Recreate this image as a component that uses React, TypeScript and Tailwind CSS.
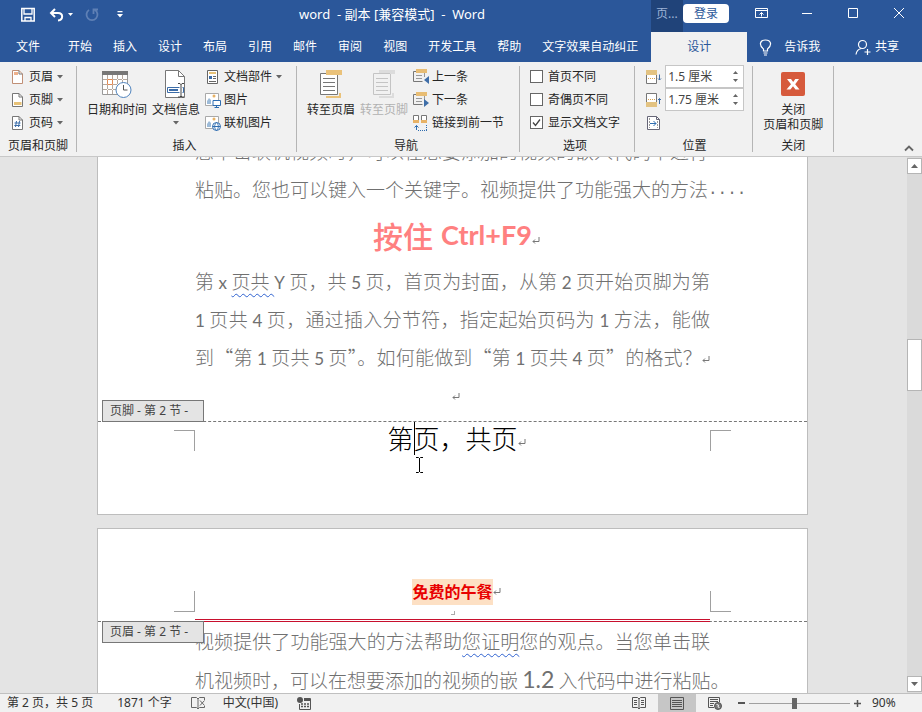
import type { ReactNode } from "react";

const UI_FONT = "font-['Noto_Sans','Noto_Sans_CJK_SC',sans-serif]";
const DOC_FONT = "font-['Noto_Sans_CJK_SC',sans-serif]";

const tabs = ["开始", "插入", "设计", "布局", "引用", "邮件", "审阅", "视图", "开发工具", "帮助", "文字效果自动纠正"];

/* ---------- small shared pieces ---------- */

function Caret() {
  return (
    <svg width="6" height="4" viewBox="0 0 6 4" className="shrink-0">
      <path d="M0 0h6L3 3.5z" fill="#666" />
    </svg>
  );
}

function ReturnMark() {
  return (
    <svg width="8" height="8" viewBox="0 0 8 8" className="inline-block shrink-0">
      <path d="M7 0v4.5H1M3 2.5l-2 2 2 2" fill="none" stroke="#777" />
    </svg>
  );
}

function Group({ label, pad, children }: { label: string; pad: string; children: ReactNode }) {
  return (
    <section className="flex">
      <div className={`flex flex-col ${pad}`}>
        <div className="flex flex-1 gap-[5px] pt-[3px]">{children}</div>
        <h2 className="pb-0.5 text-center leading-4">{label}</h2>
      </div>
      <div className="mb-1 mt-1 w-px bg-[#b5b5b5]" />
    </section>
  );
}

function Small({ icon, label, menu }: { icon: ReactNode; label: string; menu?: boolean }) {
  return (
    <button className="flex h-[23px] items-center gap-[3px] whitespace-nowrap">
      {icon}
      <span className="pr-px">{label}</span>
      {menu && <Caret />}
    </button>
  );
}

function Big({ icon, label, menu, disabled }: { icon: ReactNode; label: ReactNode; menu?: boolean; disabled?: boolean }) {
  return (
    <button disabled={disabled} className="flex flex-col items-center gap-1 self-start whitespace-nowrap pt-[5px] leading-[15px] disabled:text-[#b1b1b1]">
      {icon}
      <span>{label}</span>
      {menu && <Caret />}
    </button>
  );
}

function Check({ label, checked }: { label: string; checked?: boolean }) {
  return (
    <label className="flex h-[23px] items-center gap-[5px] whitespace-nowrap">
      <span className="grid size-[13px] *:col-start-1 *:row-start-1">
        <input type="checkbox" defaultChecked={checked} className="peer size-[13px] appearance-none border border-[#666] bg-white" />
        <svg viewBox="0 0 13 13" className="pointer-events-none hidden size-[13px] peer-checked:block">
          <path d="M3 6.5l2.5 3L10 3.5" fill="none" stroke="#444" strokeWidth="1.3" />
        </svg>
      </span>
      {label}
    </label>
  );
}

function Measure({ id, name, value, icon }: { id: string; name: string; value: string; icon: ReactNode }) {
  return (
    <div className="flex h-[23px] items-center gap-[3px]">
      <label htmlFor={id} aria-label={name}>{icon}</label>
      <div className="flex h-[23px] border border-[#c6c6c6] bg-white">
        <input id={id} defaultValue={value} className="w-[61px] pl-0.5 text-[#444] outline-none" />
        <div className="flex w-4 flex-col justify-center gap-[5px]">
          <button aria-label="增加" className="flex justify-center">
            <svg width="5" height="3" viewBox="0 0 5 3"><path d="M0 3h5L2.500 0z" fill="#666" /></svg>
          </button>
          <button aria-label="减少" className="flex justify-center">
            <svg width="5" height="3" viewBox="0 0 5 3"><path d="M0 0h5L2.500 3z" fill="#666" /></svg>
          </button>
        </div>
      </div>
    </div>
  );
}

/* ---------- ribbon icons ---------- */

function PageIcon({ kind }: { kind: "header" | "footer" | "number" }) {
  return (
    <svg width="16" height="16" viewBox="0 0 16 16" fill="none">
      <path d="M2.500 1.500h6.500l3.500 3.500v9.500h-10z" fill="#fff" stroke={kind === "header" ? "#c08f76" : "#777"} />
      <path d="M9 1.500v3.500h3.500" stroke="#777" />
      {kind === "header" && <path d="M4 3h4v3H4z" fill="#eeb18c" />}
      {kind === "footer" && <path d="M4 10h7.500v3H4z" fill="#e8c277" />}
      {kind === "number" && <path d="M6.500 6l-1 6M9.500 6l-1 6M4.500 8h6M4.300 10.500h6" stroke="#3b6ca8" />}
    </svg>
  );
}

function CalendarIcon() {
  return (
    <svg width="30" height="28" viewBox="0 0 30 28" fill="none">
      <path d="M.5 1.500h25v23H.5z" fill="#fff" stroke="#999" />
      <path d="M0 1h26v4H0z" fill="#777" />
      <path d="M5.500 5v19M10.500 5v19M15.500 5v19M20.500 5v19M1 9.500h24M1 14.500h24M1 19.500h24" stroke="#b5a89e" strokeDasharray="4 1" />
      <path d="M5.500 9.500h5v5h-5z" stroke="#e08a55" />
      <circle cx="21.500" cy="20" r="7.500" fill="#fff" stroke="#4f83bd" />
      <path d="M21.500 15v5h4" stroke="#555" />
    </svg>
  );
}

function DocInfoIcon() {
  return (
    <svg width="22" height="28" viewBox="0 0 22 28" fill="none">
      <path d="M.5.5h13l6 6v21H.5z" fill="#fff" stroke="#777" />
      <path d="M13.500.5v6h6" stroke="#777" />
      <path d="M2.500 17.500h16v5h-16z" fill="#fff" stroke="#3b6ca8" />
      <path d="M4 19h9v2H4z" fill="#3b6ca8" />
      <path d="M14.500 13v14h3V13z" fill="#fff" />
      <path d="M13 13.500h2l1 1 1-1h2M16 14v12M13 27h2l1-1 1 1h2" stroke="#444" />
    </svg>
  );
}

function PartsIcon() {
  return (
    <svg width="16" height="16" viewBox="0 0 16 16" fill="none">
      <path d="M2.500 1.500h10v13h-10z" fill="#fff" stroke="#666" />
      <path d="M4 3h7v2H4z" fill="#e8c277" />
      <path d="M4 7h3v3H4z" fill="#3b6ca8" />
      <path d="M8 7.500h3M8 9.500h3M4 12.500h7" stroke="#666" />
    </svg>
  );
}

function PictureIcon({ online }: { online?: boolean }) {
  return (
    <svg width="16" height="16" viewBox="0 0 16 16" fill="none">
      <path d="M.5 1.500h13v12H.5z" fill="#fff" stroke="#a9a9a9" />
      <circle cx="9" cy="4" r="1.500" fill="#e8b265" />
      <path d="M2 12V9l2-3 2 2v4z" fill="#9dbbd8" />
      {online ? (
        <>
          <circle cx="11.500" cy="11.500" r="4" fill="#fff" stroke="#2f6db0" />
          <path d="M7.500 11.500h8M11.500 7.500c-2.500 2.500-2.500 5.500 0 8M11.500 7.500c2.500 2.500 2.500 5.500 0 8" stroke="#2f6db0" />
        </>
      ) : (
        <>
          <path d="M8 8.500h7.500v5H8z" fill="#fff" stroke="#2f6db0" />
          <path d="M11.500 13.500v2M9.500 15.500h4.500" stroke="#2f6db0" />
        </>
      )}
    </svg>
  );
}

function GotoIcon({ off }: { off?: boolean }) {
  const line = off ? "#c4c4c4" : "#777";
  const bar = off ? "#dcdcdc" : "#eac27a";
  return (
    <svg width="22" height="28" viewBox="0 0 22 28" fill="none">
      <path d="M.5 3.500h17v21H.5z" fill={off ? "#f1f1f1" : "#fff"} stroke={line} />
      <path d={off ? "M17 0h5v4h-5zM6 0h11v3H6z" : "M6 0h16v5H6z"} fill={bar} />
      <path d="M3 8.500h12M3 12.500h12M3 16.500h12M3 20.500h12" stroke={line} />
      <path d="M6 26h15v2H6zM19 23h2v3h-2z" fill={bar} />
    </svg>
  );
}

function StepIcon({ next }: { next?: boolean }) {
  return (
    <svg width="16" height="16" viewBox="0 0 16 16" fill="none">
      <path d="M3 2.500H.5v10h9" stroke="#777" />
      <path d="M3 0h11v4H3z" fill="#e8bd74" />
      <path d="M11.500 4v4M3 6.500h6M3 9.500h6" stroke="#999" />
      <path d={next ? "M11 7l5 4-5 4z" : "M16 7l-5 4 5 4z"} fill="#3f6ea8" />
    </svg>
  );
}

function LinkPrevIcon() {
  return (
    <svg width="16" height="16" viewBox="0 0 16 16" fill="none">
      <path d="M.5 5V.5h5V5M8.500 5V.5h5V5" fill="#fff" stroke="#777" />
      <path d="M0 5h6v3H0zM8 5h6v3H8z" fill="#e8b265" />
      <path d="M3.500 15v-4.500M1.500 12.500l2-2 2 2" stroke="#2f6db0" />
      <path d="M5 15.500h9M13.500 10v5" stroke="#2f6db0" strokeDasharray="1 1" />
    </svg>
  );
}

function MarginIcon({ bottom }: { bottom?: boolean }) {
  return (
    <svg width="17" height="16" viewBox="0 0 17 16" fill="none">
      <path d={bottom ? "M1.500 11V1.500h10V11" : "M1.500 5v9.500h10V5"} fill="#fff" stroke="#777" />
      <path d={bottom ? "M1 10h11v5H1z" : "M1 1h11v5H1z"} fill="#e3c382" />
      <path d={bottom ? "M3 7.500h8" : "M3 9.500h8"} stroke="#d9a24e" strokeDasharray="1 1" />
      <path d={bottom ? "M14.500 12V6.500M13 8l1.500-1.500L16 8" : "M14.500 5.500V11M13 9.500l1.500 1.500L16 9.500"} stroke="#3f6ea8" />
    </svg>
  );
}

function AlignTabIcon() {
  return (
    <svg width="17" height="16" viewBox="0 0 17 16" fill="none">
      <path d="M2.500 1.500h9l3 3v10h-12z" fill="#fff" stroke="#667" />
      <path d="M11.500 1.500v3h3" stroke="#667" />
      <path d="M4.500 3v10M12.500 6v7" stroke="#999" strokeDasharray="2 1" />
      <path d="M5 8.500h6M8.500 6L11 8.500 8.500 11" stroke="#2f6db0" />
    </svg>
  );
}

function CloseIcon() {
  return (
    <svg width="24" height="28" viewBox="0 0 24 28">
      <rect y="2" width="24" height="24" rx="2" fill="#d65a3c" />
      <path d="M6 9h4l2.200 3L14.300 9h3.700l-3.800 5.200 4.300 5.300h-4L12 16.200l-2.600 3.300H5.500l4.500-5.300z" fill="#fff" />
    </svg>
  );
}

/* ---------- window chrome ---------- */

function TitleBar() {
  return (
    <header className="flex h-8 items-start text-white">
      <div className="flex flex-[278] items-center pl-[21px] pt-[7px]">
        <button aria-label="保存">
          <svg width="14" height="15" viewBox="0 0 14 15" fill="none" stroke="#fff">
            <path d="M.8 1.500h12.400v12.500H.8z" strokeWidth="1.500" />
            <path d="M3 2v5h8V2M4 14v-3.500h6V14" strokeWidth="1.300" />
          </svg>
        </button>
        <button aria-label="撤消" className="ml-3.5 flex items-center gap-1">
          <svg width="15" height="14" viewBox="0 0 15 14" fill="none" stroke="#fff" strokeWidth="2">
            <path d="M6 1L2 5l4 4M2.500 5H9c5.500 0 5.500 7 0 7.500" />
          </svg>
          <svg width="5" height="3" viewBox="0 0 5 3"><path d="M0 0h5L2.500 3z" fill="#fff" /></svg>
        </button>
        <button aria-label="重复" className="ml-3" disabled>
          <svg width="14" height="14" viewBox="0 0 14 14" fill="none" stroke="#5f80b5" strokeWidth="1.800">
            <path d="M4 2a5.500 5.500 0 1 0 6 0M8.500 6V1.500H13" />
          </svg>
        </button>
        <button aria-label="自定义快速访问工具栏" className="ml-[18px]">
          <svg width="6" height="7" viewBox="0 0 6 7"><path d="M.5 0h5v1.300h-5zM0 3h6L3 6.500z" fill="#fff" /></svg>
        </button>
      </div>
      <h1 className="whitespace-pre pt-1 text-[13px] leading-5">word  - 副本 [兼容模式]  -  Word</h1>
      <div className="flex flex-[437] items-start justify-end">
        <div className="h-8 w-8 bg-[#204379] pl-[5px] leading-7 text-[#9db3d6]">页...</div>
        <button className="mt-1 h-[19px] w-[46px] rounded-sm bg-white leading-[19px] text-[#2b579a]">登录</button>
        <div className="flex items-start gap-[33px] pl-[26px] pr-[17px] pt-[7px]">
          <button aria-label="功能区显示选项">
            <svg width="13" height="12" viewBox="0 0 13 12" fill="none" stroke="#fff">
              <path d="M.5 1.500h12v9H.5zM0 3.500h13M6.500 9.500v-4M4.500 7.500l2-2 2 2" />
            </svg>
          </button>
          <button aria-label="最小化">
            <svg width="13" height="12" viewBox="0 0 13 12"><path d="M1 6.500h10" stroke="#fff" /></svg>
          </button>
          <button aria-label="最大化">
            <svg width="13" height="12" viewBox="0 0 13 12"><path d="M1.500 1.500h9v9h-9z" fill="none" stroke="#fff" /></svg>
          </button>
          <button aria-label="关闭">
            <svg width="12" height="12" viewBox="0 0 12 12"><path d="M1 1l10 10M11 1L1 11" stroke="#fff" /></svg>
          </button>
        </div>
      </div>
    </header>
  );
}

function TabBar() {
  return (
    <nav className="flex h-[30px] items-stretch whitespace-nowrap pl-4 text-white">
      <button className="mr-7">文件</button>
      <div className="flex gap-[21px]">
        {tabs.map((tab) => (
          <button key={tab}>{tab}</button>
        ))}
      </div>
      <button className="ml-[13px] w-24 bg-[#f1f1f1] text-[#2b579a]">设计</button>
      <button className="ml-3 flex items-center gap-3">
        <svg width="13" height="17" viewBox="0 0 13 17" fill="none" stroke="#fff" strokeWidth="1.200">
          <path d="M4.500 12V10C-.5 6 1 1 6.500 1s7 5 2 9v2zM4.500 14h4M5 16h3" />
        </svg>
        告诉我
      </button>
      <button className="ml-auto mr-[23px] flex items-center gap-1">
        <svg width="16" height="17" viewBox="0 0 16 17" fill="none" stroke="#fff" strokeWidth="1.200">
          <circle cx="7.500" cy="5.500" r="4" />
          <path d="M1 15.500c.5-3.500 2.500-5.500 5.500-6M12.500 10v6M9.500 13h6" />
        </svg>
        共享
      </button>
    </nav>
  );
}

function Ribbon() {
  return (
    <div className="flex h-[95px] shrink-0 border-b border-[#c8c8c8] bg-[#f1f1f1] text-[#262626]">
      <Group label="页眉和页脚" pad="px-2">
        <div className="pl-0.5">
          <Small icon={<PageIcon kind="header" />} label="页眉" menu />
          <Small icon={<PageIcon kind="footer" />} label="页脚" menu />
          <Small icon={<PageIcon kind="number" />} label="页码" menu />
        </div>
      </Group>
      <Group label="插入" pad="pl-2.5 pr-3.5">
        <Big icon={<CalendarIcon />} label="日期和时间" />
        <Big icon={<DocInfoIcon />} label="文档信息" menu />
        <div>
          <Small icon={<PartsIcon />} label="文档部件" menu />
          <Small icon={<PictureIcon />} label="图片" />
          <Small icon={<PictureIcon online />} label="联机图片" />
        </div>
      </Group>
      <Group label="导航" pad="pl-2.5 pr-3.5">
        <Big icon={<GotoIcon />} label="转至页眉" />
        <Big icon={<GotoIcon off />} label="转至页脚" disabled />
        <div>
          <Small icon={<StepIcon />} label="上一条" />
          <Small icon={<StepIcon next />} label="下一条" />
          <Small icon={<LinkPrevIcon />} label="链接到前一节" />
        </div>
      </Group>
      <Group label="选项" pad="pl-2.5 pr-3.5">
        <div>
          <Check label="首页不同" />
          <Check label="奇偶页不同" />
          <Check label="显示文档文字" checked />
        </div>
      </Group>
      <Group label="位置" pad="pl-2.5 pr-2">
        <div>
          <Measure id="header-top" name="页眉顶端距离" value="1.5 厘米" icon={<MarginIcon />} />
          <Measure id="footer-bottom" name="页脚底端距离" value="1.75 厘米" icon={<MarginIcon bottom />} />
          <button aria-label="插入对齐制表位" className="flex h-[23px] items-center"><AlignTabIcon /></button>
        </div>
      </Group>
      <Group label="关闭" pad="px-2.5">
        <Big icon={<CloseIcon />} label={<>关闭<br />页眉和页脚</>} />
      </Group>
      <button aria-label="折叠功能区" className="mb-1 ml-auto mr-2 self-end">
        <svg width="10" height="7" viewBox="0 0 10 7"><path d="M1 5.500l4-4 4 4" fill="none" stroke="#666" strokeWidth="1.800" /></svg>
      </button>
    </div>
  );
}

/* ---------- document ---------- */

// latin runs use their own face, like a mixed-script paragraph in the editor
function Mixed({ text }: { text: string }) {
  return text.split(/([0-9A-Za-z+.]+)/).map((part, i) =>
    i % 2 ? <span key={i} className="font-[Lato,sans-serif] text-[17px] font-normal">{part}</span> : part,
  );
}

function Line({ children, full }: { children: ReactNode; full?: boolean }) {
  return (
    <p className={full ? "h-[38px] whitespace-nowrap leading-[38px] [text-align-last:justify]" : "h-[38px] whitespace-nowrap leading-[38px]"}>
      {children}
    </p>
  );
}

function Wavy({ children }: { children: ReactNode }) {
  return <span className="underline decoration-[#2f62d0] decoration-wavy decoration-1 underline-offset-4">{children}</span>;
}

function Tag({ children }: { children: ReactNode }) {
  return (
    <div className={`${UI_FONT} h-[22px] w-[102px] whitespace-nowrap border border-[#777] bg-[#e4e4e4] pl-[7px] text-xs leading-5 text-[#444]`}>
      {children}
    </div>
  );
}

function FirstPage() {
  return (
    <article className="relative -mt-[25px] w-[711px] shrink-0 border border-t-0 border-[#bdbdbd] bg-white">
      <div className="h-[289px] px-[97px] text-[19px] font-light text-[#707070]">
        <Line>您单击联机视频时，可以在想要添加的视频的嵌入代码中进行</Line>
        <Line>粘贴。您也可以键入一个关键字。视频提供了功能强大的方法<span className="font-['Liberation_Mono',monospace] text-base font-normal">····</span></Line>
        <h3 className="flex h-[54px] items-center justify-center text-[30px] font-medium leading-[54px] text-[#ff8080]">
          按住<span className="ml-2 font-[Lato,sans-serif] text-[27px] font-bold">Ctrl+F9</span>
          <span className="-mr-2 flex pt-3"><ReturnMark /></span>
        </h3>
        <Line full><Mixed text="第 x " /><Wavy>页共 </Wavy><Mixed text="Y 页，共 5 页，首页为封面，从第 2 页开始页脚为第" /></Line>
        <Line full><Mixed text="1 页共 4 页，通过插入分节符，指定起始页码为 1 方法，能做" /></Line>
        <Line full><Mixed text="到“第 1 页共 5 页”。如何能做到“第 1 页共 4 页”的格式？" /><ReturnMark /></Line>
        <div className="flex h-[42px] items-center justify-center pl-1.5"><ReturnMark /></div>
      </div>
      <footer className="flex h-[93px] items-start border-t border-dashed border-[#777] px-[76px]">
        <div className="mt-2 size-[21px] border-r border-t border-[#a0a0a0]" />
        <div className="flex h-9 flex-1 items-start justify-center text-[26px] font-light leading-8 text-black">
          第<span className="-mr-px h-[33px] w-px bg-black" />页，共页
          <span className="-mr-2 flex pt-[17px]"><ReturnMark /></span>
        </div>
        <div className="mt-2 size-[21px] border-l border-t border-[#a0a0a0]" />
      </footer>
      <div className="absolute left-1 top-[268px]"><Tag>页脚 - 第 2 节 -</Tag></div>
      <svg width="7" height="16" viewBox="0 0 7 16" className="absolute left-[318px] top-[325px]">
        <path d="M0 .5h2.500l1 1 1-1H7M3.500 1v14M0 15.500h2.500l1-1 1 1H7" fill="none" stroke="#000" />
      </svg>
    </article>
  );
}

function SecondPage() {
  return (
    <article className="relative w-[711px] shrink-0 border border-[#bdbdbd] bg-white">
      <header className="flex h-[93px] items-end border-b border-dashed border-[#777] px-[76px]">
        <div className="mb-[9px] size-[21px] border-b border-r border-[#a0a0a0]" />
        <div className="flex flex-1 flex-col items-center">
          <div className="mb-1.5 flex items-center">
            <span className="h-[26px] bg-[#fde0c4] text-[16px] font-bold leading-[25px] text-[#e80000]">免费的午餐</span>
            <span className="-mr-2 flex"><ReturnMark /></span>
          </div>
          <span className="mb-1 size-1 border-b border-r border-[#aaa]" />
          <div className="-mb-px flex w-full flex-col gap-px">
            <div className="h-px bg-[#c8102e]" />
            <div className="h-px bg-[#c8102e]" />
          </div>
        </div>
        <div className="mb-[9px] size-[21px] border-b border-l border-[#a0a0a0]" />
      </header>
      <div className="px-[97px] text-[19px] font-light text-[#707070]">
        <Line full>视频提供了功能强大的方法帮助<Wavy>您证明</Wavy>您的观点。当您单击联</Line>
        <Line>
          机视频时，可以在想要添加的视频的嵌 <span className="font-[Lato,sans-serif] text-[23px] font-normal leading-[38px]">1.2</span> 入代码中进行粘贴。
        </Line>
      </div>
      <div className="absolute left-1 top-[92px]"><Tag>页眉 - 第 2 节 -</Tag></div>
    </article>
  );
}

function ScrollBar() {
  return (
    <div className="flex w-[15px] shrink-0 flex-col bg-[#dadada] py-px">
      <button aria-label="向上滚动" className="flex h-4 items-center justify-center border border-[#b5b5b5] bg-white">
        <svg width="7" height="4" viewBox="0 0 7 4"><path d="M0 4h7L3.500 0z" fill="#666" /></svg>
      </button>
      <div className="flex-[165]" />
      <div className="h-[52px] border border-[#b5b5b5] bg-white" />
      <div className="flex-[285]" />
      <button aria-label="向下滚动" className="flex h-4 items-center justify-center border border-[#b5b5b5] bg-white">
        <svg width="7" height="4" viewBox="0 0 7 4"><path d="M0 0h7L3.500 4z" fill="#666" /></svg>
      </button>
    </div>
  );
}

function StatusBar() {
  return (
    <footer className="flex h-[19px] shrink-0 items-center whitespace-nowrap border-t border-[#c0c0c0] bg-[#f1f1f1] pl-[7px] text-[#333]">
      <span>第 2 页，共 5 页</span>
      <span className="ml-6">1871 个字</span>
      <svg width="15" height="13" viewBox="0 0 15 13" fill="none" stroke="#666" className="ml-[19px]">
        <path d="M7 2L5.500.5H.5v10h5L7 12zM7 2L8.500.5h5V3M7 12l1.500-1.500h5V9M9 3.500l4.500 5M13.500 3.500L9 8.500" />
      </svg>
      <span className="ml-[17px]">中文(中国)</span>
      <svg width="14" height="13" viewBox="0 0 14 13" fill="none" className="ml-[19px]">
        <path d="M7 1.500h6.500v11H2.500V7" stroke="#555" />
        <path d="M7 2h6v2H7z" fill="#555" />
        <circle cx="3" cy="3" r="3" fill="#555" />
        <path d="M4 7h8M4 9.500h8" stroke="#555" strokeDasharray="2 1" strokeWidth="1.500" />
      </svg>
      <div className="ml-auto flex h-full items-center">
        <button aria-label="阅读视图" className="px-3">
          <svg width="14" height="13" viewBox="0 0 14 13" fill="none" stroke="#555">
            <path d="M7 2L5.500.5H.5v10h5L7 12l1.500-1.500h5V.5h-5zM7 2v10M2 3.500h3M2 5.500h3M2 7.500h3M9 3.500h3M9 5.500h3M9 7.500h3" />
          </svg>
        </button>
        <button aria-label="页面视图" className="flex h-full w-[38px] items-center justify-center bg-[#c6c6c6]">
          <svg width="14" height="13" viewBox="0 0 14 13" fill="none" stroke="#555">
            <path d="M.5.5h13v12H.5zM2 3.500h10M2 5.500h10M2 7.500h10M2 9.500h10" />
          </svg>
        </button>
        <button aria-label="Web 版式视图" className="pl-3 pr-4">
          <svg width="14" height="13" viewBox="0 0 14 13" fill="none" stroke="#555">
            <path d="M6 10.500H.5V.5h11V5M2 2.500h8M2 4.500h8M2 6.500h4M2 8.500h3" />
            <circle cx="10" cy="9" r="3.500" fill="#777" />
            <path d="M8.500 7.500l2 .5-.5 2 1.500.500" stroke="#eee" />
          </svg>
        </button>
        <button aria-label="缩小"><svg width="7" height="3" viewBox="0 0 7 3"><path d="M0 0h7v2H0z" fill="#555" /></svg></button>
        <label aria-label="缩放" className="mx-1 flex items-center">
          <input
            type="range"
            min="0"
            max="100"
            defaultValue="45"
            className="h-3 w-[101px] appearance-none bg-transparent [&::-webkit-slider-runnable-track]:h-px [&::-webkit-slider-runnable-track]:bg-[#a0a0a0] [&::-webkit-slider-thumb]:-mt-[5px] [&::-webkit-slider-thumb]:h-[11px] [&::-webkit-slider-thumb]:w-[5px] [&::-webkit-slider-thumb]:appearance-none [&::-webkit-slider-thumb]:bg-[#666]"
          />
        </label>
        <button aria-label="放大"><svg width="7" height="7" viewBox="0 0 7 7"><path d="M0 3.500h7M3.500 0v7" stroke="#555" strokeWidth="1.500" /></svg></button>
        <span className="w-[61px] pl-[11px]">90%</span>
      </div>
    </footer>
  );
}

export default function App() {
  return (
    <div lang="zh-CN" className={`${UI_FONT} flex h-screen flex-col overflow-hidden text-xs`}>
      <div className="shrink-0 bg-[#2b579a]">
        <TitleBar />
        <TabBar />
      </div>
      <Ribbon />
      <div className="flex min-h-0 flex-1 bg-[#e4e4e4]">
        <main className={`${DOC_FONT} flex min-w-0 flex-1 flex-col items-center gap-[13px] overflow-hidden pr-0.5`}>
          <FirstPage />
          <SecondPage />
        </main>
        <ScrollBar />
      </div>
      <StatusBar />
    </div>
  );
}
